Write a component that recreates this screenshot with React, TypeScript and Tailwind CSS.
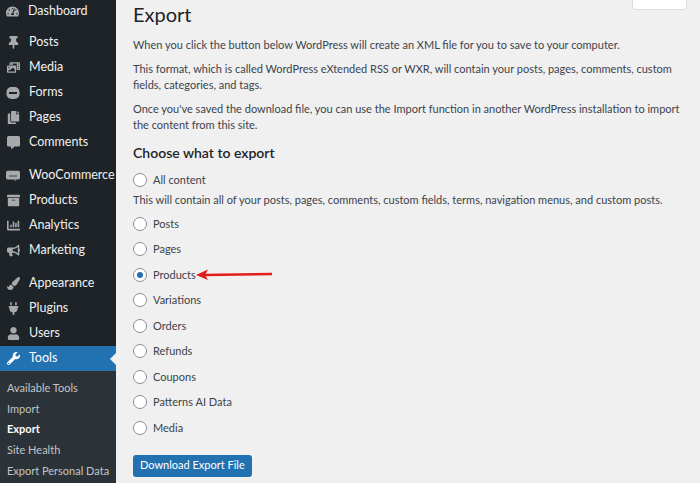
import {
  FaTachometerAlt,
  FaThumbtack,
  FaPhotoVideo,
  FaCommentAlt,
  FaCopy,
  FaArchive,
  FaChartBar,
  FaBullhorn,
  FaPaintBrush,
  FaPlug,
  FaUser,
  FaWrench,
} from "react-icons/fa";
import type { IconType } from "react-icons";

const FormsIcon = () => (
  <svg width="14" height="14" viewBox="0 0 14 14">
    <rect x="0.5" y="1" width="13" height="12" rx="5" fill="#a7aaad" />
    <rect x="3" y="6" width="8" height="2" fill="#1d2327" />
  </svg>
);

const WooIcon = () => (
  <svg width="16" height="12" viewBox="0 0 16 12">
    <rect x="0" y="0" width="16" height="10" rx="2" fill="#a7aaad" />
    <path d="M9 10 L11 12 L11 10 Z" fill="#a7aaad" />
    <text x="8" y="7" fontSize="5" textAnchor="middle" fill="#1d2327" fontFamily="Liberation Sans">
      woo
    </text>
  </svg>
);

type Item = { label: string; icon: IconType | (() => React.ReactElement); gap?: boolean };

const MENU: Item[] = [
  { label: "Posts", icon: FaThumbtack, gap: true },
  { label: "Media", icon: FaPhotoVideo },
  { label: "Forms", icon: FormsIcon },
  { label: "Pages", icon: FaCopy },
  { label: "Comments", icon: FaCommentAlt },
  { label: "WooCommerce", icon: WooIcon, gap: true },
  { label: "Products", icon: FaArchive },
  { label: "Analytics", icon: FaChartBar },
  { label: "Marketing", icon: FaBullhorn },
  { label: "Appearance", icon: FaPaintBrush, gap: true },
  { label: "Plugins", icon: FaPlug },
  { label: "Users", icon: FaUser },
];

const SUB = ["Available Tools", "Import", "Export", "Site Health", "Export Personal Data"];

const OPTIONS = ["Posts", "Pages", "Products", "Variations", "Orders", "Refunds", "Coupons", "Patterns AI Data", "Media"];

const Radio = ({ checked }: { checked?: boolean }) => (
  <span className="flex h-[14px] w-[14px] shrink-0 items-center justify-center rounded-full border border-[#8c8f94] bg-white">
    {checked && <span className="h-[6px] w-[6px] rounded-full bg-[#2271b1]" />}
  </span>
);

export default function App() {
  return (
    <div
      className="flex h-[483px] w-[700px] overflow-hidden bg-[#f0f0f1] text-[#3c434a]"
      style={{ fontFamily: 'Lato, "Noto Sans", sans-serif' }}
    >
      <aside className="flex w-[116px] shrink-0 flex-col bg-[#1d2327] text-[12.5px] text-[#f0f0f1]">
        <div className="flex h-[22px] items-center gap-[9px] pl-[6px]">
          <FaTachometerAlt size={13} className="text-[#a7aaad]" />
          <span>Dashboard</span>
        </div>
        {MENU.map((m) => {
          const I = m.icon;
          return (
            <div key={m.label} className={`flex h-[25px] items-center gap-[9px] pl-[6px] ${m.gap ? "mt-[8px]" : ""}`}>
              <span className="flex w-[14px] justify-center text-[#a7aaad]">
                <I size={13} />
              </span>
              <span>{m.label}</span>
            </div>
          );
        })}
        <div className="relative flex h-[25px] items-center gap-[9px] bg-[#2271b1] pl-[6px] text-white">
          <span className="flex w-[14px] justify-center">
            <FaWrench size={13} />
          </span>
          <span>Tools</span>
          <span className="absolute right-0 top-[7px] h-0 w-0 border-y-[6px] border-r-[6px] border-y-transparent border-r-[#f0f0f1]" />
        </div>
        <div className="flex flex-1 flex-col bg-[#2c3338] pt-[7px] text-[11px] text-[#c3c4c7]">
          {SUB.map((s) => (
            <div key={s} className={`flex h-[20.7px] items-center pl-[7px] ${s === "Export" ? "font-bold text-white" : ""}`}>
              {s}
            </div>
          ))}
        </div>
      </aside>

      <main className="relative flex-1 pl-[17px] pr-[12px] text-[11px]">
        <div className="absolute right-[13px] top-[-4px] h-[14px] w-[55px] rounded-[3px] border border-[#dcdcde] bg-white" />
        <h1 className="mt-[2px] text-[20px] leading-[24px] text-[#1d2327]">Export</h1>
        <p className="mt-[11px] leading-[15px]">When you click the button below WordPress will create an XML file for you to save to your computer.</p>
        <p className="mt-[9px] leading-[16px]">
          This format, which is called WordPress eXtended RSS or WXR, will contain your posts, pages, comments, custom fields, categories, and tags.
        </p>
        <p className="mt-[8px] leading-[16px]">
          Once you've saved the download file, you can use the Import function in another WordPress installation to import the content from this site.
        </p>
        <h2 className="mt-[10px] text-[14px] font-semibold leading-[20px] text-[#1d2327]">Choose what to export</h2>
        <div className="mt-[7px] flex h-[20px] items-center gap-[6px]">
          <Radio />
          <span>All content</span>
        </div>
        <p className="mt-[2px] leading-[16px]">
          This will contain all of your posts, pages, comments, custom fields, terms, navigation menus, and custom posts.
        </p>
        <div className="mt-[3px] flex flex-col">
          {OPTIONS.map((o) => (
            <div key={o} className="flex h-[25.5px] items-center gap-[6px]">
              <Radio checked={o === "Products"} />
              <span>{o}</span>
            </div>
          ))}
        </div>
        <button className="mt-[14px] h-[22px] rounded-[3px] bg-[#2271b1] px-[7px] text-[11px] text-white">
          Download Export File
        </button>
        <svg className="absolute left-[78px] top-[267px]" width="80" height="16" viewBox="0 0 80 16">
          <line x1="10" y1="8" x2="78" y2="7" stroke="#e31b1b" strokeWidth="2.5" />
          <path d="M2 8 L14 2.5 L11 8 L14 13 Z" fill="#e31b1b" />
        </svg>
      </main>
    </div>
  );
}
